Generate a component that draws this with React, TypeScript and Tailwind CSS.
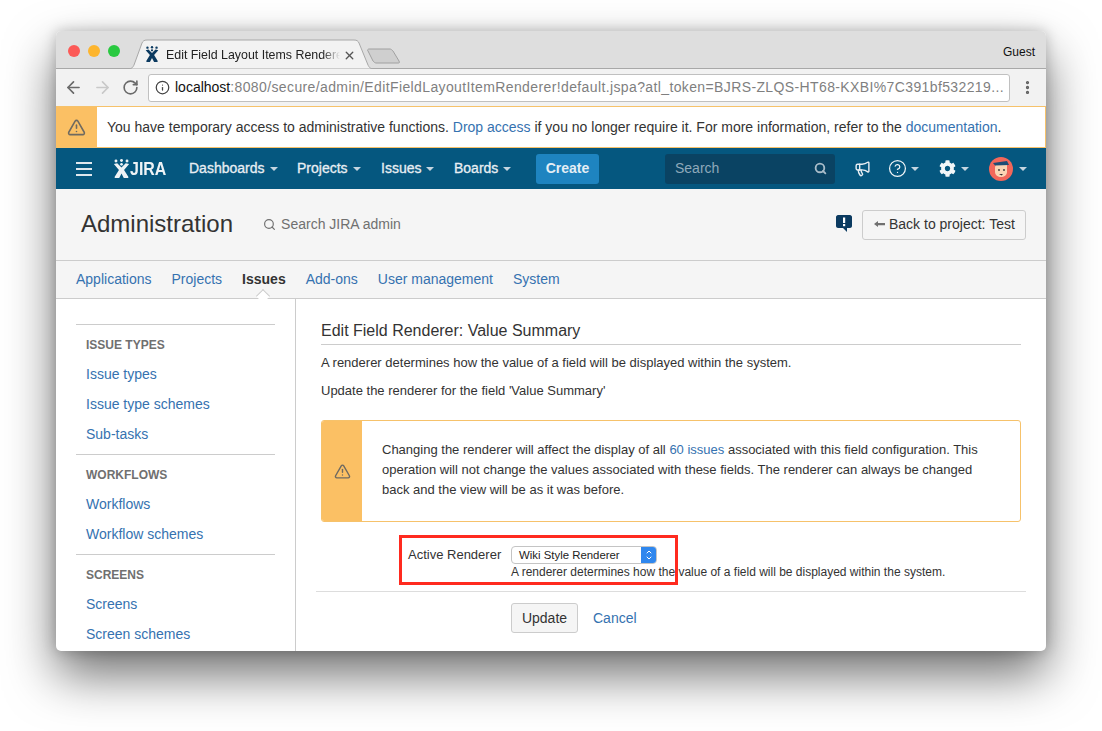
import React from "react";
import { ArrowLeft, ArrowRight, RotateCw, Info, EllipsisVertical, TriangleAlert, Search, Megaphone, CircleHelp, X, ChevronUp, ChevronDown } from "lucide-react";
import { FaCog } from "react-icons/fa";

const Caret = ({ c = "border-t-[#c5d5e0]" }: { c?: string }) => (
  <span className={`inline-block w-0 h-0 border-x-[4px] border-x-transparent border-t-[4px] ${c}`} />
);

const JiraMark = ({ color, size }: { color: string; size: number }) => (
  <svg width={size} height={size * 1.15} viewBox="0 0 20 23" fill={color}>
    <circle cx="3.5" cy="2.4" r="1.7" />
    <circle cx="10" cy="1.8" r="1.7" />
    <circle cx="16.5" cy="2.4" r="1.7" />
    <path d="M1 6 L5 5 L10 10 L15 5 L19 6 L13 13 L18 21 L18 23 L13 23 L10 17 L7 23 L2 23 L2 21 L7 13 Z" />
    <circle cx="10" cy="6.2" r="1.6" />
  </svg>
);

const NavItem = ({ label, w }: { label: string; w: string }) => (
  <div className={`flex items-center gap-[5px] ${w}`}>
    <span className="text-[14px] text-[#e8eef3] [-webkit-text-stroke:0.3px_#e8eef3]">{label}</span>
    <Caret />
  </div>
);

const SideGroup = ({ title, items }: { title: string; items: string[] }) => (
  <div className="border-t border-[#cccccc] h-[130px] shrink-0">
    <div className="pl-[10px] pt-[6px] h-[34px] flex items-center text-[12px] font-bold text-[#707070]">{title}</div>
    {items.map((t) => (
      <div key={t} className="pl-[10px] h-[30px] flex items-center text-[14px] text-[#3572b0]">{t}</div>
    ))}
  </div>
);

export default function App() {
  return (
    <div className="relative w-[1102px] h-[731px] overflow-hidden bg-white pl-[56px] pt-[31px] font-['Liberation_Sans',Arial,sans-serif]">
      <div className="relative w-[990px] h-[620px] rounded-[5px] overflow-hidden bg-white shadow-[0_24px_50px_rgba(0,0,0,0.56),0_0_14px_rgba(0,0,0,0.22)]">
        {/* Tab strip */}
        <div className="relative h-[38px] bg-[#dedede] border-b border-[#a8a8a8] flex items-start">
          <div className="flex gap-[8px] pl-[12px] pt-[14px]">
            <span className="w-[12px] h-[12px] rounded-full bg-[#fc5a57]" />
            <span className="w-[12px] h-[12px] rounded-full bg-[#fdb52e]" />
            <span className="w-[12px] h-[12px] rounded-full bg-[#29c940]" />
          </div>
          <div className="absolute left-[72px] top-[8px] w-[250px] h-[30px]">
            <svg width="250" height="30" className="absolute inset-0">
              <path d="M0 30 C4 30 5 28 6 26 L14 4 C15 2 16 1 19 1 L226 1 C229 1 230 2 231 4 L240 26 C241 28 242 30 246 30 Z" fill="#f2f2f2" stroke="#a8a8a8" />
            </svg>
            <div className="absolute left-[17px] top-[7px]"><JiraMark color="#0b3a60" size={14} /></div>
            <span className="absolute left-[38px] top-[9px] text-[12.4px] leading-[15px] w-[174px] overflow-hidden whitespace-nowrap text-[#222] [mask-image:linear-gradient(to_right,black_90%,transparent)]">Edit Field Layout Items Renderer</span>
            <X size={13} strokeWidth={2.5} className="absolute left-[215px] top-[10px] text-[#555]" />
          </div>
          <svg width="36" height="18" className="absolute left-[311px] top-[17px]">
            <path d="M2 1 L23 1 C24 1 25 2 26 3 L32 13 C33 15 32 15 31 15 L9 15 C8 15 7 14 6 13 L1 3 C0 2 1 1 2 1 Z" fill="#cfcfcf" stroke="#a0a0a0" />
          </svg>
          <span className="absolute right-[11px] top-[14px] text-[12px] leading-[14px] text-[#111]">Guest</span>
        </div>

        {/* Toolbar */}
        <div className="h-[37px] bg-[#f2f2f2] flex items-center">
          <div className="w-[92px] flex items-center pl-[8px] gap-[10px] shrink-0">
            <ArrowLeft size={19} strokeWidth={2.1} className="text-[#6a6a6a]" />
            <ArrowRight size={19} strokeWidth={2.1} className="text-[#c9c9c9]" />
            <RotateCw size={17} strokeWidth={2.3} className="text-[#6a6a6a]" />
          </div>
          <div className="w-[862px] h-[28px] bg-white border border-[#c0c0c0] rounded-[3px] flex items-center pl-[6px] shrink-0">
            <Info size={15} strokeWidth={2} className="text-[#444] shrink-0" />
            <span className="ml-[5px] text-[14px] whitespace-nowrap text-[#7f7f7f]"><span className="text-[#111]">localhost</span><span className="tracking-[0.38px]">:8080/secure/admin/EditFieldLayoutItemRenderer!default.jspa?atl_token=BJRS-ZLQS-HT68-KXBI%7C391bf532219...</span></span>
          </div>
          <EllipsisVertical size={17} strokeWidth={2.6} className="ml-[9px] text-[#5f5f5f]" />
        </div>

        {/* Banner */}
        <div className="h-[42px] flex border border-[#f6c26b] bg-white border-l-0">
          <div className="w-[41px] bg-[#fbc064] flex items-center justify-center shrink-0">
            <TriangleAlert size={19} strokeWidth={2} className="text-[#6f6a60]" />
          </div>
          <div className="pl-[10px] flex items-center text-[14px] text-[#333]">
            <span>You have temporary access to administrative functions. <span className="text-[#3572b0]">Drop access</span> if you no longer require it. For more information, refer to the <span className="text-[#3572b0]">documentation</span>.</span>
          </div>
        </div>

        {/* Nav */}
        <div className="relative h-[41px] bg-[#05577f] flex items-center">
          <div className="w-[57px] pl-[20px] flex flex-col gap-[4px] shrink-0">
            <span className="w-[16px] h-[2px] bg-[#dfe8ee]" />
            <span className="w-[16px] h-[2px] bg-[#dfe8ee]" />
            <span className="w-[16px] h-[2px] bg-[#dfe8ee]" />
          </div>
          <div className="w-[76px] flex items-center shrink-0">
            <JiraMark color="#eef3f6" size={17} />
            <span className="inline-block ml-[0px] text-[19px] leading-none font-bold text-[#eef3f6] origin-left scale-x-[0.84]">JIRA</span>
          </div>
          <NavItem label="Dashboards" w="w-[108px]" />
          <NavItem label="Projects" w="w-[84px]" />
          <NavItem label="Issues" w="w-[73px]" />
          <NavItem label="Boards" w="w-[82px]" />
          <div className="h-[30px] w-[63px] rounded-[3px] bg-[#1e84c0] flex items-center justify-center text-[14px] font-bold text-[#e4eef5] shrink-0">Create</div>
          <div className="ml-[66px] w-[170px] h-[30px] rounded-[3px] bg-[#0a4363] flex items-center justify-between pl-[10px] pr-[8px] shrink-0">
            <span className="text-[14px] text-[#8fa9ba]">Search</span>
            <Search size={13} strokeWidth={3.4} className="text-[#a9bcc9]" />
          </div>
          <Megaphone size={17} strokeWidth={2} className="ml-[19px] text-[#e8eef3]" />
          <CircleHelp size={19} strokeWidth={1.6} className="ml-[17px] text-[#eef3f6]" />
          <span className="ml-[4px] flex"><Caret /></span>
          <FaCog size={17} className="ml-[20px] text-[#f2f6f8]" />
          <span className="ml-[5px] flex"><Caret /></span>
          <svg width="24" height="24" viewBox="0 0 24 24" className="ml-[20px]">
            <circle cx="12" cy="12" r="12" fill="#f2675a" />
            <path d="M6 11 C6 7 8 7 12 7 L18 7 L18 15 C18 18 15 20 12 20 C9 20 6 18 6 15 Z" fill="#fbd5b4" />
            <path d="M4 6 L18 4 L20 8 L6 8.5 Z" fill="#1f4d75" />
            <circle cx="10" cy="13" r="0.9" fill="#333" />
            <circle cx="15" cy="13" r="0.9" fill="#333" />
            <path d="M10 17 L14 17 L12.5 18.5 Z" fill="#333" />
          </svg>
          <span className="ml-[6px] flex"><Caret /></span>
        </div>

        {/* Admin header */}
        <div className="h-[71px] bg-[#f5f5f5] flex items-center pl-[25px] pr-[20px]">
          <span className="text-[24px] leading-[30px] text-[#333] mb-[2px]">Administration</span>
          <Search size={13} strokeWidth={2.2} className="ml-[30px] text-[#707070]" />
          <span className="ml-[5px] text-[14px] text-[#707070]">Search JIRA admin</span>
          <div className="ml-auto flex items-center gap-[10px]">
            <svg width="16" height="19" viewBox="0 0 16 19" className="mb-[2px]">
              <path d="M2 1 H14 C15 1 16 2 16 3 V12 C16 13 15 14 14 14 H11 V18 L7 14 H2 C1 14 0 13 0 12 V3 C0 2 1 1 2 1 Z" fill="#0b3a60" />
              <rect x="7" y="3.5" width="2.2" height="5.5" fill="#fff" />
              <rect x="7" y="10" width="2.2" height="2.2" fill="#fff" />
            </svg>
            <div className="h-[30px] w-[164px] border border-[#ccc] rounded-[3px] flex items-center pl-[11px] text-[14px] text-[#333]">
              <svg width="11" height="8" viewBox="0 0 11 8" className="mr-[4px]"><path d="M4 0 L0 3 L4 6 V4.2 H11 V2 H4 Z" fill="#707070" /></svg>
              Back to project: Test
            </div>
          </div>
        </div>

        {/* Tabs */}
        <div className="relative h-[39px] bg-[#f5f5f5] border-y border-[#cccccc] flex items-center pl-[20px] gap-[20px] text-[14px] text-[#3572b0]">
          <span>Applications</span>
          <span>Projects</span>
          <span className="relative font-bold text-[#333]">Issues
            <span className="absolute left-[16px] top-[22px] w-[10px] h-[10px] rotate-45 bg-white border-l border-t border-[#cccccc]" />
          </span>
          <span>Add-ons</span>
          <span>User management</span>
          <span>System</span>
        </div>

        {/* Body */}
        <div className="flex h-[352px] overflow-hidden">
          <div className="w-[240px] shrink-0 border-r border-[#cccccc] pl-[20px] pr-[20px] pt-[25px] flex flex-col -mb-[40px]">
            <SideGroup title="ISSUE TYPES" items={["Issue types", "Issue type schemes", "Sub-tasks"]} />
            <div className="h-[100px] shrink-0"><SideGroup title="WORKFLOWS" items={["Workflows", "Workflow schemes"]} /></div>
            <SideGroup title="SCREENS" items={["Screens", "Screen schemes"]} />
          </div>
          <div className="flex-1 pl-[25px] pr-[25px] pt-[22px] text-[13px] text-[#333]">
            <div className="text-[16px] leading-[20px] border-b border-[#cccccc] pb-[3px]">Edit Field Renderer: Value Summary</div>
            <p className="mt-[9px] leading-[18px]">A renderer determines how the value of a field will be displayed within the system.</p>
            <p className="mt-[10px] leading-[18px]">Update the renderer for the field 'Value Summary'</p>
            <div className="mt-[20px] h-[102px] border border-[#f6c26b] rounded-[3px] flex overflow-hidden">
              <div className="w-[40px] bg-[#fbc064] flex items-center justify-center shrink-0">
                <TriangleAlert size={17} strokeWidth={2} className="text-[#6f6a60]" />
              </div>
              <div className="pl-[20px] pr-[30px] pt-[19px] leading-[20px]">
                Changing the renderer will affect the display of all <span className="text-[#3572b0]">60 issues</span> associated with this field configuration. This operation will not change the values associated with these fields. The renderer can always be changed back and the view will be as it was before.
              </div>
            </div>
            <div className="relative -mx-[5px] mt-[24px] h-[46px] border-b border-[#dddddd]">
              <span className="absolute left-[92px] top-[0px] leading-[17px] text-[13px]">Active Renderer</span>
              <div className="absolute left-[195px] top-[0px] w-[146px] h-[18px] rounded-[4px] bg-white border border-[#c4c4c4] flex items-center overflow-hidden">
                <span className="pl-[7px] pt-[1px] flex-1 text-[11.4px] text-[#222]">Wiki Style Renderer</span>
                <span className="w-[15px] h-full bg-[#2f87ee] flex flex-col items-center justify-center text-white">
                  <ChevronUp size={8} strokeWidth={3} className="-mb-[1px]" />
                  <ChevronDown size={8} strokeWidth={3} className="-mt-[1px]" />
                </span>
              </div>
              <span className="absolute left-[195px] top-[18px] leading-[16px] text-[12px] whitespace-nowrap">A renderer determines how the value of a field will be displayed within the system.</span>
            </div>
            <div className="flex items-center mt-[11px] pl-[190px]">
              <div className="w-[67px] h-[30px] border border-[#ccc] rounded-[3px] bg-[#f5f5f5] flex items-center justify-center text-[14px]">Update</div>
              <span className="ml-[15px] text-[14px] text-[#3572b0]">Cancel</span>
            </div>
          </div>
        </div>
      </div>
      <div className="absolute left-[399px] top-[535px] w-[279px] h-[50px] border-[3px] border-[#ff2a1f]" />
    </div>
  );
}
